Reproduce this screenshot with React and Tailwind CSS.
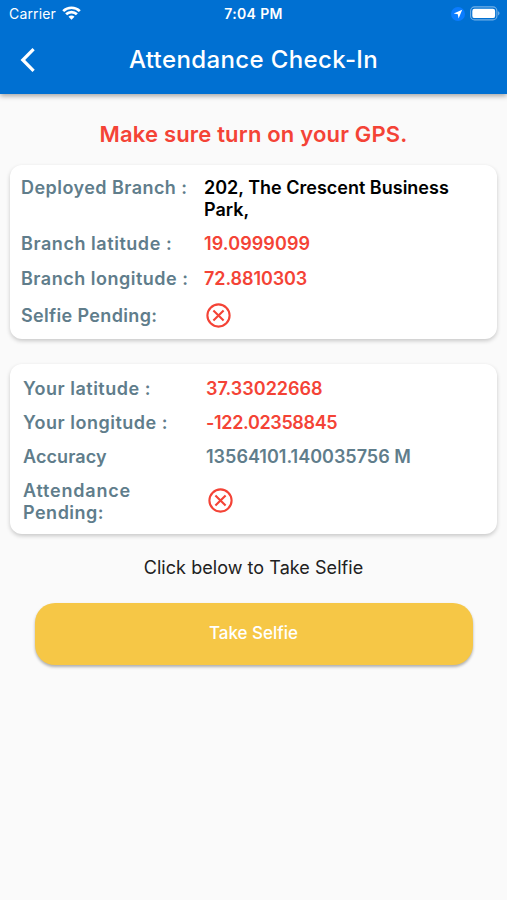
function StatusBar() {
  return (
    <div className="flex h-7 items-center justify-between pl-[9px] pr-[7px] text-white">
      <div className="flex flex-1 items-center gap-[6px]">
        <span className="text-[14px] leading-7 tracking-[0.15px]">Carrier</span>
        <svg width="19" height="14" viewBox="0 0 19 14" fill="none" stroke="currentColor" strokeWidth="2.7" className="-mt-[2px]">
          <path d="M1.2 5.1 C5.8 0.6 13.2 0.6 17.8 5.1" />
          <path d="M4.1 8.3 C7.1 5.3 11.9 5.3 14.9 8.3" />
          <path d="M9.5 13.8 L6.5 10.7 C8.2 9.1 10.8 9.1 12.5 10.7 Z" fill="currentColor" stroke="none" />
        </svg>
      </div>
      <span className="mr-[2px] text-[14px] leading-7 font-semibold tracking-[0.35px]">7:04 PM</span>
      <div className="flex flex-1 items-center justify-end gap-[5px]">
        <svg width="14" height="14" viewBox="0 0 14 14">
          <circle cx="7" cy="7" r="7" fill="#0a7cff" />
          <path d="M11.2 2.8 L7.6 11.4 L6.8 7.3 L2.7 6.6 Z" fill="#fff" />
        </svg>
        <svg width="30" height="15" viewBox="0 0 30 15" className="-mt-px">
          <rect x="0.6" y="0.9" width="26.3" height="13" rx="4" fill="none" stroke="#fff" strokeOpacity="0.45" strokeWidth="1.1" />
          <rect x="2.3" y="2.7" width="22.8" height="9.4" rx="2.2" fill="#fff" />
          <path d="M28.2 5.2 C29.9 5.8 29.9 8.8 28.2 9.4 Z" fill="#fff" fillOpacity="0.5" />
        </svg>
      </div>
    </div>
  );
}

function PendingIcon({ className }) {
  return (
    <svg width="29" height="29" viewBox="0 0 29 29" fill="none" stroke="#f44336" strokeWidth="2.1" className={className}>
      <circle cx="14.5" cy="14.5" r="11.1" />
      <path d="M9.4 9.4 L19.6 19.6 M19.6 9.4 L9.4 19.6" />
    </svg>
  );
}

function Card({ children }) {
  return (
    <div className="mx-[10px] rounded-[12px] bg-white shadow-[0_2px_4px_rgba(0,0,0,0.2)]">
      {children}
    </div>
  );
}

export default function App() {
  return (
    <div className="flex min-h-[900px] w-full flex-col bg-[#fafafa] font-['Inter',sans-serif]">
      <header className="h-[94px] bg-[#0070d2] shadow-[0_2px_5px_rgba(0,0,0,0.35)]">
        <StatusBar />
        <div className="flex h-[64px] items-center text-white">
          <div className="flex w-[60px] pl-[20px]">
            <svg width="16" height="24" viewBox="0 0 16 24" fill="none" stroke="currentColor" strokeWidth="3.2">
              <path d="M13.6 1.2 L2.8 12 L13.6 22.8" />
            </svg>
          </div>
          <h1 className="flex-1 text-center text-[24px] font-medium tracking-[0.38px]">Attendance Check-In</h1>
          <div className="w-[60px]" />
        </div>
      </header>

      <p className="mt-[25px] text-center text-[22px] leading-[30px] font-semibold tracking-[0.18px] text-[#f44336]">
        Make sure turn on your GPS.
      </p>

      <div className="mt-[16px]">
        <Card>
          <div className="grid h-[174px] grid-cols-[183px_1fr] content-start gap-y-3 pt-3 pl-[11px] text-[18px] leading-[22px] font-semibold">
            <span className="tracking-[0.45px] whitespace-nowrap text-[#607d8b]">Deployed Branch :</span>
            <span className="w-[270px] text-black">
              202, The Crescent Business
              <br />
              Park,
            </span>
            <span className="tracking-[0.55px] whitespace-nowrap text-[#607d8b]">Branch latitude :</span>
            <span className="tracking-[0.1px] text-[#f44336]">19.0999099</span>
            <span className="pt-px tracking-[0.5px] whitespace-nowrap text-[#607d8b]">Branch longitude :</span>
            <span className="pt-px tracking-[-0.1px] text-[#f44336]">72.8810303</span>
            <span className="pt-[3px] tracking-[0.35px] whitespace-nowrap text-[#607d8b]">Selfie Pending:</span>
            <PendingIcon className="-mt-px" />
          </div>
        </Card>
      </div>

      <div className="mt-[25px]">
        <Card>
          <div className="grid h-[170px] grid-cols-[183px_1fr] content-start gap-y-3 pt-[14px] pl-[13px] text-[18px] leading-[22px] font-semibold">
            <span className="tracking-[0.5px] text-[#607d8b]">Your latitude :</span>
            <span className="text-[#f44336]">37.33022668</span>
            <span className="tracking-[0.5px] text-[#607d8b]">Your longitude :</span>
            <span className="tracking-[-0.35px] text-[#f44336]">-122.02358845</span>
            <span className="tracking-[0.1px] text-[#607d8b]">Accuracy</span>
            <span className="text-[#607d8b]">13564101.140035756 M</span>
            <span className="tracking-[0.8px] text-[#607d8b]">
              Attendance
              <br />
              <span className="tracking-[0.5px]">Pending:</span>
            </span>
            <PendingIcon className="mt-[6px]" />
          </div>
        </Card>
      </div>

      <p className="mt-[22px] text-center text-[18px] leading-[24px] tracking-[0.05px] text-[#212121]">
        Click below to Take Selfie
      </p>

      <button className="mr-[34px] ml-[35px] mt-[23px] h-[62px] rounded-[20px] bg-[#f6c746] pr-px text-[17px] font-medium text-white shadow-[0_2px_3px_rgba(0,0,0,0.3)]">
        Take Selfie
      </button>
    </div>
  );
}
